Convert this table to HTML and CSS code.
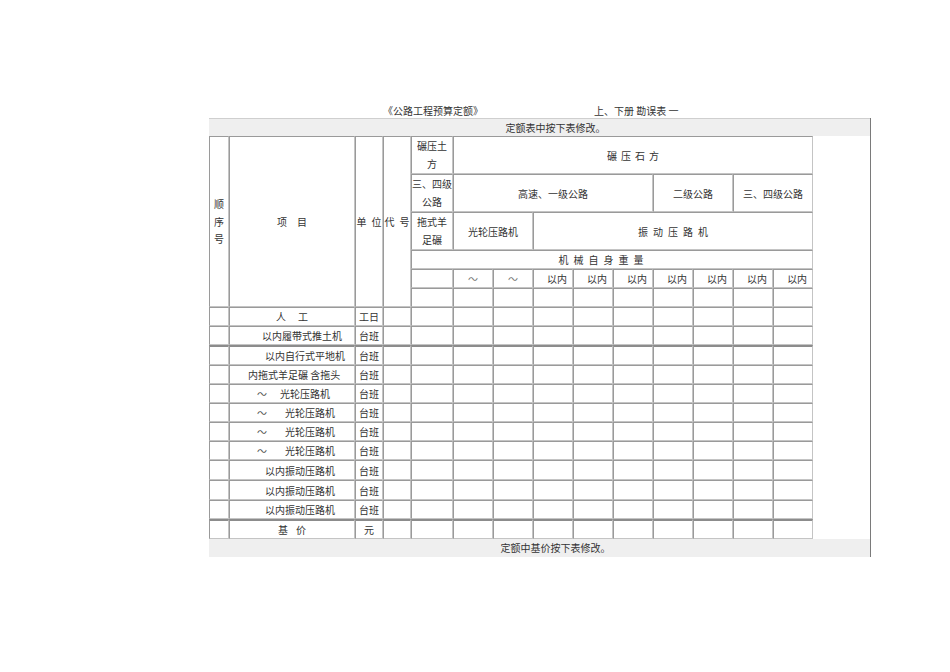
FILE: index.html
```html
<!DOCTYPE html>
<html lang="zh">
<head>
<meta charset="utf-8">
<title>勘误表</title>
<link rel="stylesheet" href="styles.css">
</head>
<body>
<div class="page">
  <div class="title"><span class="t1">《公路工程预算定额》</span><span class="t2">上、下册 勘误表 一</span></div>
  <div class="sheet">
    <div class="bar bar-top">定额表中按下表修改。</div>
    <table class="grid">
      <colgroup>
        <col class="c1"><col class="c2"><col class="c3"><col class="c4"><col class="c5">
        <col class="cn"><col class="cn"><col class="cn"><col class="cn"><col class="cn"><col class="cn"><col class="cn"><col class="cn"><col class="cl">
      </colgroup>
      <tr class="h38">
        <td rowspan="6" class="vt">顺<br>序<br>号</td>
        <td rowspan="6" class="ctr"><span class="sp10">项目</span></td>
        <td rowspan="6" class="ctr tight"><span class="spt">单位</span></td>
        <td rowspan="6" class="ctr tight"><span class="spt">代号</span></td>
        <td class="two">碾压土<br>方</td>
        <td colspan="9" class="ctr"><span class="sp4">碾压石方</span></td>
      </tr>
      <tr class="h38">
        <td class="two">三、四级<br>公路</td>
        <td colspan="5" class="ctr">高速、一级公路</td>
        <td colspan="2" class="ctr">二级公路</td>
        <td colspan="2" class="ctr">三、四级公路</td>
      </tr>
      <tr class="h36">
        <td class="two">拖式羊<br>足碾</td>
        <td colspan="2" class="ctr">光轮压路机</td>
        <td colspan="7" class="ctr"><span class="sp5">振动压路机</span></td>
      </tr>
      <tr class="h19">
        <td colspan="10" class="ctr weight"><span class="sp5">机械自身重量</span></td>
      </tr>
      <tr class="h19">
        <td></td>
        <td class="ctr tilde">～</td>
        <td class="ctr tilde">～</td>
        <td class="rt">以内</td><td class="rt">以内</td><td class="rt">以内</td><td class="rt">以内</td><td class="rt">以内</td><td class="rt">以内</td><td class="rt">以内</td>
      </tr>
      <tr class="h19">
        <td></td><td></td><td></td><td></td><td></td><td></td><td></td><td></td><td></td><td></td>
      </tr>

      <tr class="h19">
        <td></td><td class="ctr"><span class="sp12">人工</span></td><td class="ctr">工日</td><td></td>
        <td></td><td></td><td></td><td></td><td></td><td></td><td></td><td></td><td></td><td></td>
      </tr>
      <tr class="h19">
        <td></td><td class="item in33">以内履带式推土机</td><td class="ctr">台班</td><td></td>
        <td></td><td></td><td></td><td></td><td></td><td></td><td></td><td></td><td></td><td></td>
      </tr>
      <tr class="h20 sep">
        <td></td><td class="item in36">以内自行式平地机</td><td class="ctr">台班</td><td></td>
        <td></td><td></td><td></td><td></td><td></td><td></td><td></td><td></td><td></td><td></td>
      </tr>
      <tr class="h19">
        <td></td><td class="item in19">内拖式羊足碾 含拖头</td><td class="ctr">台班</td><td></td>
        <td></td><td></td><td></td><td></td><td></td><td></td><td></td><td></td><td></td><td></td>
      </tr>
      <tr class="h19">
        <td></td><td class="item in28"><span class="tl">～</span>光轮压路机</td><td class="ctr">台班</td><td></td>
        <td></td><td></td><td></td><td></td><td></td><td></td><td></td><td></td><td></td><td></td>
      </tr>
      <tr class="h19">
        <td></td><td class="item in28"><span class="tl tl2">～</span>光轮压路机</td><td class="ctr">台班</td><td></td>
        <td></td><td></td><td></td><td></td><td></td><td></td><td></td><td></td><td></td><td></td>
      </tr>
      <tr class="h19">
        <td></td><td class="item in28"><span class="tl tl2">～</span>光轮压路机</td><td class="ctr">台班</td><td></td>
        <td></td><td></td><td></td><td></td><td></td><td></td><td></td><td></td><td></td><td></td>
      </tr>
      <tr class="h19">
        <td></td><td class="item in28"><span class="tl tl2">～</span>光轮压路机</td><td class="ctr">台班</td><td></td>
        <td></td><td></td><td></td><td></td><td></td><td></td><td></td><td></td><td></td><td></td>
      </tr>
      <tr class="h20">
        <td></td><td class="item in36">以内振动压路机</td><td class="ctr">台班</td><td></td>
        <td></td><td></td><td></td><td></td><td></td><td></td><td></td><td></td><td></td><td></td>
      </tr>
      <tr class="h20">
        <td></td><td class="item in36">以内振动压路机</td><td class="ctr">台班</td><td></td>
        <td></td><td></td><td></td><td></td><td></td><td></td><td></td><td></td><td></td><td></td>
      </tr>
      <tr class="h19">
        <td></td><td class="item in36">以内振动压路机</td><td class="ctr">台班</td><td></td>
        <td></td><td></td><td></td><td></td><td></td><td></td><td></td><td></td><td></td><td></td>
      </tr>
      <tr class="h20 sep">
        <td></td><td class="ctr"><span class="sp8">基价</span></td><td class="ctr">元</td><td></td>
        <td></td><td></td><td></td><td></td><td></td><td></td><td></td><td></td><td></td><td></td>
      </tr>
    </table>
    <div class="bar bar-bottom">定额中基价按下表修改。</div>
  </div>
</div>
</body>
</html>
```

FILE: styles.css
```css
html, body {
  margin: 0;
  padding: 0;
  background: #ffffff;
}

body {
  font-family: "Noto Sans CJK SC", "Liberation Serif", sans-serif;
  font-size: 10px;
  color: #333333;
}

.page {
  padding-top: 104px;
}

.title {
  display: flex;
  height: 14px;
  line-height: 14px;
  margin-left: 383px;
}

.title .t1 {
  width: 211px;
}

.sheet {
  margin-left: 209px;
  width: 661px;
  border-right: 1px solid #7a7a7a;
}

.bar {
  background: #efefef;
  line-height: 18px;
  height: 18px;
  text-align: center;
  padding-left: 32px;
}

.bar-top {
  border-top: 1px solid #cfcfcf;
  height: 17px;
  line-height: 17px;
}

.grid {
  width: 604px;
  table-layout: fixed;
  border-collapse: separate;
  border-spacing: 0;
  background: #ffffff;
}

.c1 { width: 20px; }
.c2 { width: 126px; }
.c3 { width: 28px; }
.c4 { width: 28px; }
.c5 { width: 42px; }
.cn { width: 40px; }
.cl { width: 40px; }

.grid td {
  padding: 0;
  border: 1px solid;
  border-color: #9a9a9a #c4c4c4 #c4c4c4 #9a9a9a;
  vertical-align: middle;
  white-space: nowrap;
  overflow: hidden;
  line-height: 17px;
}

.grid td.tight {
  overflow: visible;
}

.h38 { height: 38px; }
.h36 { height: 36px; }
.h19 { height: 19px; }
.h20 { height: 20px; }

.grid .sep td {
  border-top: 2px solid #8c8c8c;
}

.ctr { text-align: center; }
.rt { text-align: right; padding-right: 5px !important; }

.vt {
  text-align: center;
  line-height: 17.5px !important;
}

.two {
  text-align: center;
  line-height: 18px !important;
}

.weight {
  padding-right: 22px !important;
}

.tilde {
  color: #777777;
}

.item {
  text-align: left;
}

.in33 { padding-left: 32px !important; }
.in36 { padding-left: 35px !important; }
.in19 { padding-left: 18px !important; }
.in28 { padding-left: 27px !important; }

.tl {
  display: inline-block;
  width: 23px;
  color: #555555;
}

.tl2 { width: 28px; }

.spt { letter-spacing: 5px; margin-right: -5px; }
.sp4 { letter-spacing: 4px; padding-left: 4px; }
.sp5 { letter-spacing: 5px; padding-left: 5px; }
.sp8 { letter-spacing: 8px; padding-left: 8px; }
.sp10 { letter-spacing: 10px; padding-left: 10px; }
.sp12 { letter-spacing: 12px; padding-left: 12px; }
```
